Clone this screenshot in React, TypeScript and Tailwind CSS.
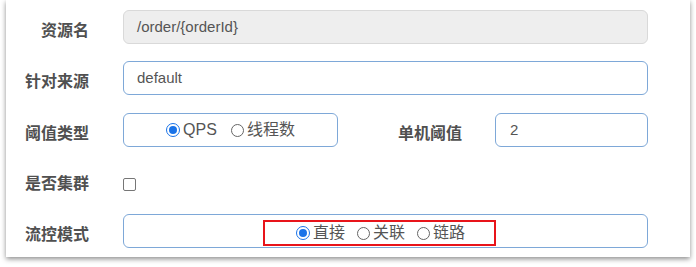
import React from "react";

const FONT = { fontFamily: '"Liberation Sans", "Noto Sans CJK SC", Arial, sans-serif' };

function Radio({ checked, label }: { checked?: boolean; label: string }) {
  return (
    <span className="flex items-center">
      {checked ? (
        <span className="w-[14px] h-[14px] rounded-full border-[1.5px] border-[#1a73e8] bg-white flex items-center justify-center">
          <span className="w-[8px] h-[8px] rounded-full bg-[#1a73e8]" />
        </span>
      ) : (
        <span className="w-[13px] h-[13px] rounded-full border-[1.5px] border-[#666] bg-white" />
      )}
      <span className="ml-[3px] text-[16px] text-[#555]">{label}</span>
    </span>
  );
}

function Label({ text, w = "w-[83px]" }: { text: string; w?: string }) {
  return (
    <div className={`${w} shrink-0 text-right pt-[7px] text-[16px] font-bold text-[#505050]`}>{text}</div>
  );
}

export default function App() {
  return (
    <div className="w-[696px] h-[267px] bg-white overflow-hidden" style={FONT}>
      <div className="ml-[6px] w-[684px] h-[257px] bg-white shadow-[0_2px_5px_rgba(0,0,0,0.45)] flex flex-col">
        {/* Row 1 */}
        <div className="flex items-center mt-[10px] h-[34px]">
          <Label text="资源名" />
          <div className="ml-[34px] w-[525px] h-[34px] rounded-[6px] border border-[#d9d9d9] bg-[#eeeeee] flex items-center px-[13px] text-[15px] text-[#555]">
            /order/{"{orderId}"}
          </div>
        </div>
        {/* Row 2 */}
        <div className="flex items-center mt-[17px] h-[34px]">
          <Label text="针对来源" />
          <div className="ml-[34px] w-[525px] h-[34px] rounded-[6px] border border-[#7ea8d8] bg-white flex items-center px-[13px] text-[15px] text-[#555]">
            default
          </div>
        </div>
        {/* Row 3 */}
        <div className="flex items-center mt-[18px] h-[34px]">
          <Label text="阈值类型" />
          <div className="ml-[34px] w-[215px] h-[34px] rounded-[6px] border border-[#7ea8d8] bg-white flex items-center justify-center gap-[14px]">
            <Radio checked label="QPS" />
            <Radio label="线程数" />
          </div>
          <Label text="单机阈值" w="w-[124px]" />
          <div className="ml-[33px] w-[153px] h-[34px] rounded-[6px] border border-[#7ea8d8] bg-white flex items-center px-[14px] text-[15px] text-[#555]">
            2
          </div>
        </div>
        {/* Row 4 */}
        <div className="flex items-center mt-[17px] h-[33px]">
          <Label text="是否集群" />
          <div className="ml-[34px] mt-[8px] w-[13px] h-[13px] rounded-[2px] border border-[#767676] bg-white" />
        </div>
        {/* Row 5 */}
        <div className="flex items-center mt-[17px] h-[34px]">
          <Label text="流控模式" />
          <div className="ml-[34px] w-[525px] h-[34px] rounded-[6px] border border-[#7ea8d8] bg-white flex items-center justify-center">
            <div className="mr-[12px] mt-[4px] w-[233px] h-[26px] border-2 border-[#e8141a] flex items-center pl-[31px] gap-[12px]">
              <Radio checked label="直接" />
              <Radio label="关联" />
              <Radio label="链路" />
            </div>
          </div>
        </div>
      </div>
    </div>
  );
}
